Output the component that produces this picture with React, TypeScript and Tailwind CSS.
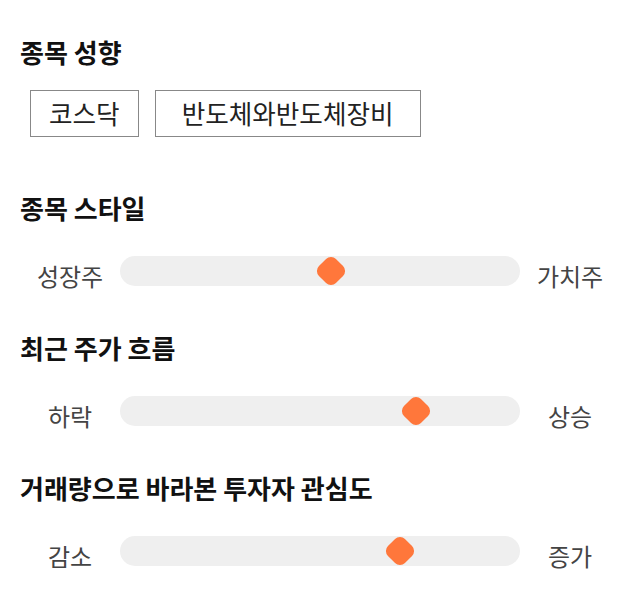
import React from "react";

const font = { fontFamily: '"Noto Sans CJK KR", "Noto Sans", sans-serif' };

type SliderProps = { left: string; right: string; pos: number };

function Slider({ left, right, pos }: SliderProps) {
  return (
    <div className="flex items-start">
      <div className="w-[100px] shrink-0 pt-[5px] text-center text-[24px] leading-[30px] text-[#444]">{left}</div>
      <div className="relative h-[30px] flex-1 rounded-full bg-[#efefef]">
        <div
          className="absolute top-[3px] h-[24px] w-[24px] -translate-x-1/2 rotate-45 rounded-[7px] bg-[#ff773b]"
          style={{ left: pos }}
        />
      </div>
      <div className="w-[100px] shrink-0 pt-[5px] text-center text-[24px] leading-[30px] text-[#444]">{right}</div>
    </div>
  );
}

function Heading({ children, className }: { children: React.ReactNode; className?: string }) {
  return <h2 className={"text-[26px] font-bold leading-[30px] text-[#111] " + (className ?? "")}>{children}</h2>;
}

export default function App() {
  return (
    <div className="h-[606px] w-[640px] bg-white px-5 pt-[37px]" style={font}>
      <Heading>종목 성향</Heading>
      <div className="ml-[10px] mt-[23px] flex gap-4">
        <div className="flex h-[47px] items-center border border-[#888] px-[18px] text-[25.6px] text-[#222]">코스닥</div>
        <div className="flex h-[47px] items-center border border-[#888] px-[26px] text-[25.6px] text-[#222]">반도체와반도체장비</div>
      </div>
      <Heading className="mt-[56px]">종목 스타일</Heading>
      <div className="mt-[33px]">
        <Slider left="성장주" right="가치주" pos={211} />
      </div>
      <Heading className="mt-[42px]">최근 주가 흐름</Heading>
      <div className="mt-[33px]">
        <Slider left="하락" right="상승" pos={296} />
      </div>
      <Heading className="mt-[42px]">거래량으로 바라본 투자자 관심도</Heading>
      <div className="mt-[33px]">
        <Slider left="감소" right="증가" pos={280} />
      </div>
    </div>
  );
}
